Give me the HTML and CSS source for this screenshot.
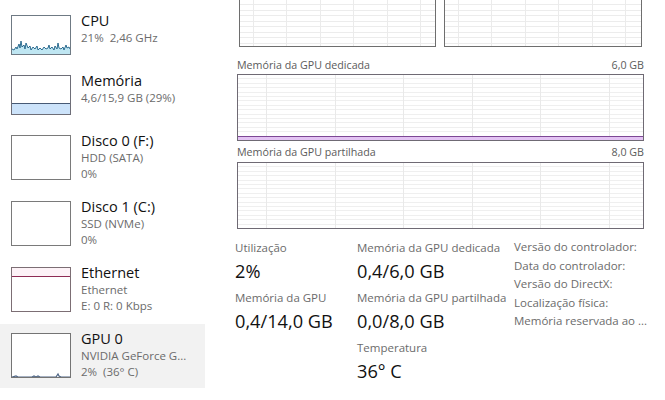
FILE: index.html
```html
<!DOCTYPE html>
<html lang="pt">
<head>
<meta charset="utf-8">
<title>Gestor de Tarefas - GPU</title>
<link rel="stylesheet" href="styles.css">
</head>
<body>
<div class="app">
  <aside class="sidebar">
    <div class="item short">
      <div class="thumb cpu">
        <svg viewBox="0 0 58 38" preserveAspectRatio="none">
          <polygon class="cpu-fill" points="0,38 0,33 2,34 4,31 5,33 7,28 8,32 9,25 10,31 12,29 13,33 14,27 16,32 18,30 19,34 21,31 23,33 25,30 26,34 28,32 30,34 32,31 34,33 36,32 37,29 38,33 40,31 42,34 43,30 45,33 46,27 47,32 49,33 51,31 52,34 54,29 55,32 57,31 58,33 58,38"/>
          <polyline class="cpu-line" points="0,33 2,34 4,31 5,33 7,28 8,32 9,25 10,31 12,29 13,33 14,27 16,32 18,30 19,34 21,31 23,33 25,30 26,34 28,32 30,34 32,31 34,33 36,32 37,29 38,33 40,31 42,34 43,30 45,33 46,27 47,32 49,33 51,31 52,34 54,29 55,32 57,31 58,33"/>
        </svg>
      </div>
      <div class="info">
        <div class="title">CPU</div>
        <div class="sub">21%&nbsp; 2,46 GHz</div>
      </div>
    </div>
    <div class="item short">
      <div class="thumb mem"><div class="mem-fill"></div></div>
      <div class="info">
        <div class="title">Memória</div>
        <div class="sub">4,6/15,9 GB (29%)</div>
      </div>
    </div>
    <div class="item">
      <div class="thumb"></div>
      <div class="info">
        <div class="title">Disco 0 (F:)</div>
        <div class="sub">HDD (SATA)</div>
        <div class="sub">0%</div>
      </div>
    </div>
    <div class="item">
      <div class="thumb"></div>
      <div class="info">
        <div class="title">Disco 1 (C:)</div>
        <div class="sub">SSD (NVMe)</div>
        <div class="sub">0%</div>
      </div>
    </div>
    <div class="item">
      <div class="thumb eth"><div class="eth-band"></div></div>
      <div class="info">
        <div class="title">Ethernet</div>
        <div class="sub">Ethernet</div>
        <div class="sub">E: 0 R: 0 Kbps</div>
      </div>
    </div>
    <div class="item selected">
      <div class="thumb gpu">
        <svg viewBox="0 0 58 43" preserveAspectRatio="none">
          <polyline class="gpu-line" points="0,43 4,42 6,43 20,43 22,42 24,43 26,42 28,43 44,43 46,40 47,42 49,43 58,43"/>
        </svg>
      </div>
      <div class="info">
        <div class="title">GPU 0</div>
        <div class="sub">NVIDIA GeForce G...</div>
        <div class="sub">2%&nbsp; (36° C)</div>
      </div>
    </div>
  </aside>

  <main class="main">
    <div class="top-graphs">
      <div class="graph small"></div>
      <div class="graph small right"></div>
    </div>

    <div class="graph-head first">
      <span>Memória da GPU dedicada</span>
      <span>6,0 GB</span>
    </div>
    <div class="graph big">
      <div class="ded-fill"></div>
    </div>

    <div class="graph-head">
      <span>Memória da GPU partilhada</span>
      <span>8,0 GB</span>
    </div>
    <div class="graph big"></div>

    <div class="stats">
      <div class="col c1">
        <div class="label">Utilização</div>
        <div class="value">2%</div>
        <div class="label">Memória da GPU</div>
        <div class="value">0,4/14,0 GB</div>
      </div>
      <div class="col c2">
        <div class="label">Memória da GPU dedicada</div>
        <div class="value">0,4/6,0 GB</div>
        <div class="label">Memória da GPU partilhada</div>
        <div class="value">0,0/8,0 GB</div>
        <div class="label">Temperatura</div>
        <div class="value">36° C</div>
      </div>
      <div class="col c3">
        <div class="prop">Versão do controlador:</div>
        <div class="prop">Data do controlador:</div>
        <div class="prop">Versão do DirectX:</div>
        <div class="prop">Localização física:</div>
        <div class="prop">Memória reservada ao ...</div>
      </div>
    </div>
  </main>
</div>
</body>
</html>
```

FILE: styles.css
```css
* { box-sizing: border-box; }

html, body {
  margin: 0;
  padding: 0;
  background: #ffffff;
}

body {
  font-family: "Open Sans", "Noto Sans", sans-serif;
  color: #1a1a1a;
  width: 665px;
  height: 400px;
  overflow: hidden;
}

.app {
  display: flex;
  align-items: flex-start;
}

/* ---------- sidebar ---------- */
.sidebar {
  width: 205px;
  flex: none;
  padding-top: 6px;
}

.item {
  display: flex;
  height: 66px;
  padding: 9px 0 0 11px;
}

.item.short {
  height: 60px;
}

.item.selected {
  background: #f2f2f2;
  height: 64px;
}

.thumb {
  width: 60px;
  height: 45px;
  border: 1px solid #7a7a7a;
  background: #fff;
  flex: none;
  position: relative;
  overflow: hidden;
}

.item.short .thumb {
  height: 40px;
}

.thumb svg {
  display: block;
  width: 100%;
  height: 100%;
}

.cpu { border-color: #6f7a84; }
.cpu-fill { fill: #bfe6f2; }
.cpu-line { fill: none; stroke: #1b5f86; stroke-width: 0.9; }

.mem { border-color: #6e6e78; display: flex; flex-direction: column; justify-content: flex-end; }
.mem-fill {
  height: 11px;
  background: #cce3fa;
  border-top: 1px solid #475a75;
}

.eth { border-color: #7c6e74; }
.eth-band {
  height: 9px;
  background: #fdf2f7;
  border-bottom: 1px solid #8e2c55;
}

.gpu { border-color: #747474; }
.gpu-line { fill: none; stroke: #4e6585; stroke-width: 1.2; }

.info {
  margin-top: -4px;
  padding-left: 10px;
  min-width: 0;
}

.title {
  font-size: 14.5px;
  line-height: 19px;
  color: #111;
  white-space: nowrap;
}

.sub {
  font-size: 11.5px;
  line-height: 16px;
  color: #6b6b6b;
  white-space: nowrap;
}

/* ---------- main ---------- */
.main {
  width: 407px;
  margin-left: 32px;
  flex: none;
}

.top-graphs {
  display: flex;
  gap: 8px;
  padding: 0 2px;
}

.graph {
  border: 1px solid #6f6a74;
  position: relative;
  background-color: #fff;
}

.graph.small {
  width: 197px;
  height: 47px;
  border-top: none;
  border-color: #6e6e6e;
  background-image:
    repeating-linear-gradient(to right, transparent 0 13px, #ebebeb 13px 14px, transparent 14px 33.4px),
    repeating-linear-gradient(to bottom, transparent 0 4.5px, #ececec 4.5px 5.5px);
}

.graph.small.right {
  width: 198px;
}

.graph-head {
  display: flex;
  justify-content: space-between;
  font-size: 10.7px;
  line-height: 14px;
  color: #5b5b5b;
  margin-top: 4px;
  margin-bottom: 3px;
}

.graph-head.first {
  margin-top: 11px;
  margin-bottom: 2px;
}

.graph.big {
  height: 67px;
  background-image:
    repeating-linear-gradient(to right, transparent 0 28px, #e9e9e9 28px 29px, transparent 29px 68.6px),
    repeating-linear-gradient(to bottom, transparent 0 3.4px, #efefef 3.4px 4.4px);
}

.ded-fill {
  position: absolute;
  left: 0;
  right: 0;
  bottom: 0;
  height: 4px;
  background: #e3c3f3;
  border-top: 1px solid #7d4795;
}

/* ---------- stats ---------- */
.stats {
  display: grid;
  grid-template-columns: 122px 157px 1fr;
  margin-top: 11px;
  margin-left: -2px;
}

.label {
  font-size: 11.5px;
  line-height: 16px;
  color: #6b6b6b;
  white-space: nowrap;
}

.value {
  font-size: 18.2px;
  line-height: 31px;
  margin-bottom: 3px;
  color: #111;
  white-space: nowrap;
}

.c3 {
  margin-top: -2px;
}

.prop {
  font-size: 11.5px;
  line-height: 18.5px;
  color: #6b6b6b;
  white-space: nowrap;
}
```
